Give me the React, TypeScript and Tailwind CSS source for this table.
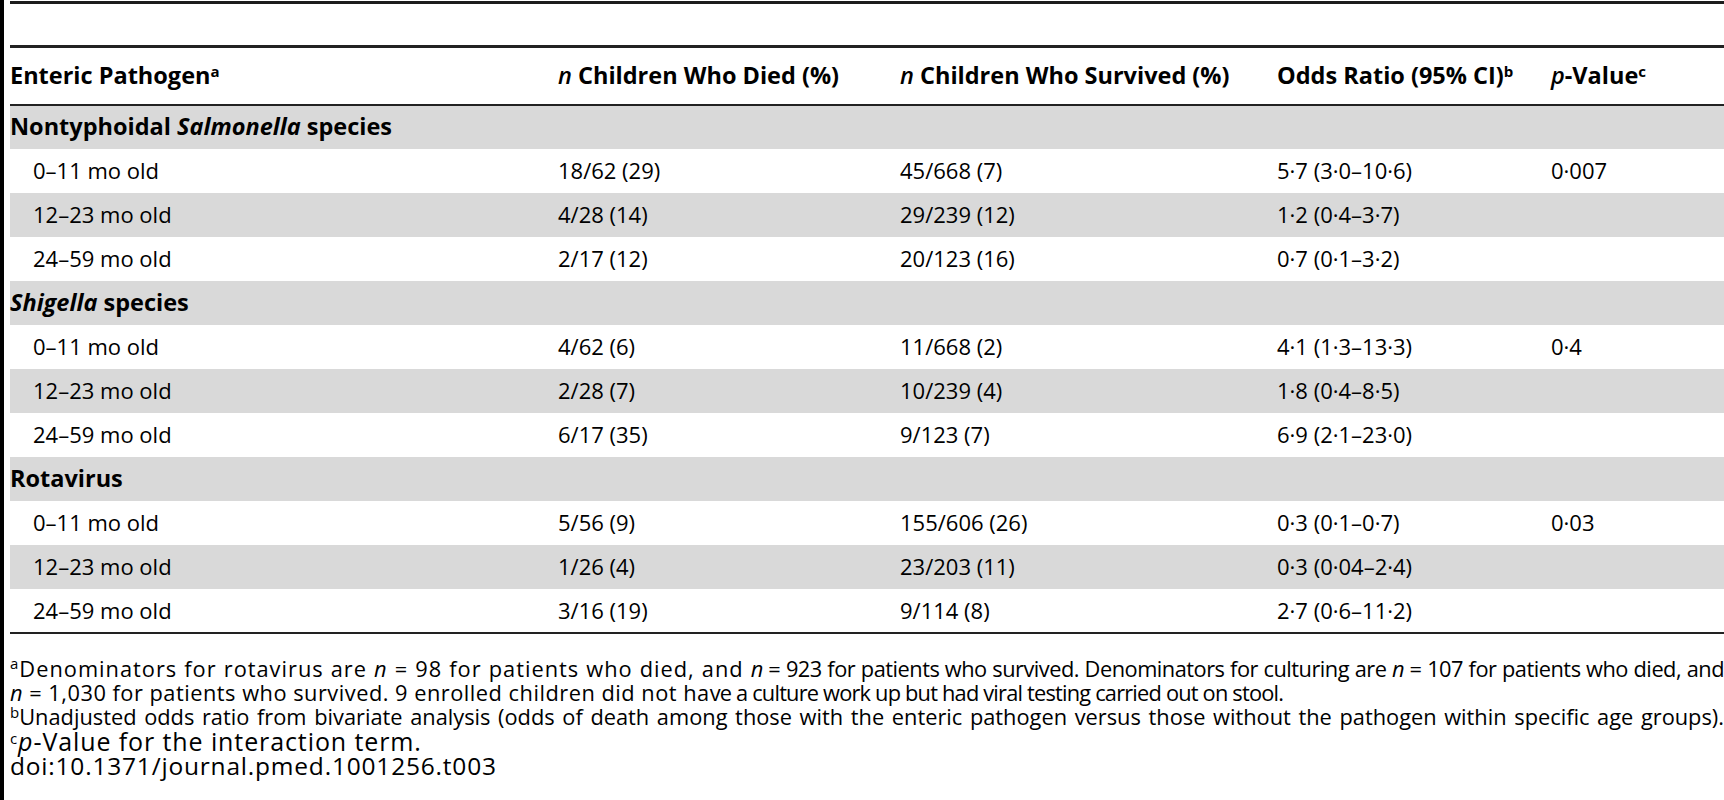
import React from 'react';

type Row = {
  label: React.ReactNode;
  died?: string;
  survived?: string;
  odds?: string;
  p?: string;
  group?: boolean;
};

const rows: Row[] = [
  { label: <>Nontyphoidal <i>Salmonella</i> species</>, group: true },
  { label: '0–11 mo old', died: '18/62 (29)', survived: '45/668 (7)', odds: '5·7 (3·0–10·6)', p: '0·007' },
  { label: '12–23 mo old', died: '4/28 (14)', survived: '29/239 (12)', odds: '1·2 (0·4–3·7)' },
  { label: '24–59 mo old', died: '2/17 (12)', survived: '20/123 (16)', odds: '0·7 (0·1–3·2)' },
  { label: <><i>Shigella</i> species</>, group: true },
  { label: '0–11 mo old', died: '4/62 (6)', survived: '11/668 (2)', odds: '4·1 (1·3–13·3)', p: '0·4' },
  { label: '12–23 mo old', died: '2/28 (7)', survived: '10/239 (4)', odds: '1·8 (0·4–8·5)' },
  { label: '24–59 mo old', died: '6/17 (35)', survived: '9/123 (7)', odds: '6·9 (2·1–23·0)' },
  { label: 'Rotavirus', group: true },
  { label: '0–11 mo old', died: '5/56 (9)', survived: '155/606 (26)', odds: '0·3 (0·1–0·7)', p: '0·03' },
  { label: '12–23 mo old', died: '1/26 (4)', survived: '23/203 (11)', odds: '0·3 (0·04–2·4)' },
  { label: '24–59 mo old', died: '3/16 (19)', survived: '9/114 (8)', odds: '2·7 (0·6–11·2)' },
];

// superscript footnote marker
const Sup: React.FC<{ children: React.ReactNode }> = ({ children }) => (
  <sup className="text-[15px]">{children}</sup>
);

const App: React.FC = () => {
  return (
    <div className="flex min-h-screen w-full bg-white text-black" style={{ fontFamily: '"Open Sans", sans-serif' }}>
      {/* left edge bar */}
      <div className="w-[4px] shrink-0 bg-black" />

      <div className="ml-[6px] flex-1 min-w-0">
        {/* top rule */}
        <div className="mt-[1px] h-[3px] bg-[#1c1c1c]" />
        <div className="h-[41px]" />

        <table className="w-full table-fixed border-collapse border-t-[3px] border-b-2 border-[#222]">
          <colgroup>
            <col className="w-[548px]" />
            <col className="w-[342px]" />
            <col className="w-[377px]" />
            <col className="w-[274px]" />
            <col />
          </colgroup>
          <thead>
            <tr className="h-[58px] border-b-2 border-[#222] text-[23.5px] font-bold text-left">
              <th className="font-bold whitespace-nowrap">Enteric Pathogen<Sup>a</Sup></th>
              <th className="font-bold whitespace-nowrap"><i className="font-semibold">n</i> Children Who Died (%)</th>
              <th className="font-bold whitespace-nowrap"><i className="font-semibold">n</i> Children Who Survived (%)</th>
              <th className="font-bold whitespace-nowrap">Odds Ratio (95% CI)<Sup>b</Sup></th>
              <th className="font-bold whitespace-nowrap"><i className="font-semibold">p</i>-Value<Sup>c</Sup></th>
            </tr>
          </thead>
          <tbody className="text-[22px]">
            {rows.map((r, i) => (
              <tr key={i} className={`h-[44px] ${i % 2 === 0 ? 'bg-[#d9d9d9]' : 'bg-white'}`}>
                {r.group ? (
                  <td colSpan={5} className="text-[23.5px] font-bold whitespace-nowrap">{r.label}</td>
                ) : (
                  <>
                    <td className="pl-[23px] whitespace-nowrap">{r.label}</td>
                    <td className="whitespace-nowrap">{r.died}</td>
                    <td className="whitespace-nowrap">{r.survived}</td>
                    <td className="whitespace-nowrap">{r.odds}</td>
                    <td className="whitespace-nowrap">{r.p}</td>
                  </>
                )}
              </tr>
            ))}
          </tbody>
        </table>

        {/* footnotes */}
        <div className="pt-[23px] text-[21.8px] leading-[24.3px] whitespace-nowrap">
          <div className="text-justify [text-align-last:justify]">
            <span className="tracking-[1px]">
              <Sup>a</Sup>Denominators for rotavirus are <i>n</i> = 98 for patients who died, and{' '}
            </span>
            <span className="tracking-[-0.5px]">
              <i>n</i> = 923 for patients who survived. Denominators for culturing are <i>n</i> = 107 for patients who died, and
            </span>
          </div>
          <div>
            <span className="tracking-[0.5px]">
              <i>n</i> = 1,030 for patients who survived. 9 enrolled children did not ha
            </span>
            <span className="tracking-[-0.8px]">ve a culture work up but had viral testing carried out on stool.</span>
          </div>
          <div className="text-justify [text-align-last:justify]">
            <Sup>b</Sup>Unadjusted odds ratio from bivariate analysis (odds of death among those with the enteric pathogen versus those without the pathogen within specific age groups).
          </div>
          <div className="text-[25px] tracking-[0.9px]">
            <Sup>c</Sup><i>p</i>-Value for the interaction term.
          </div>
          <div className="text-[24.5px] tracking-[0.8px]">doi:10.1371/journal.pmed.1001256.t003</div>
        </div>
      </div>
    </div>
  );
};

export default App;
